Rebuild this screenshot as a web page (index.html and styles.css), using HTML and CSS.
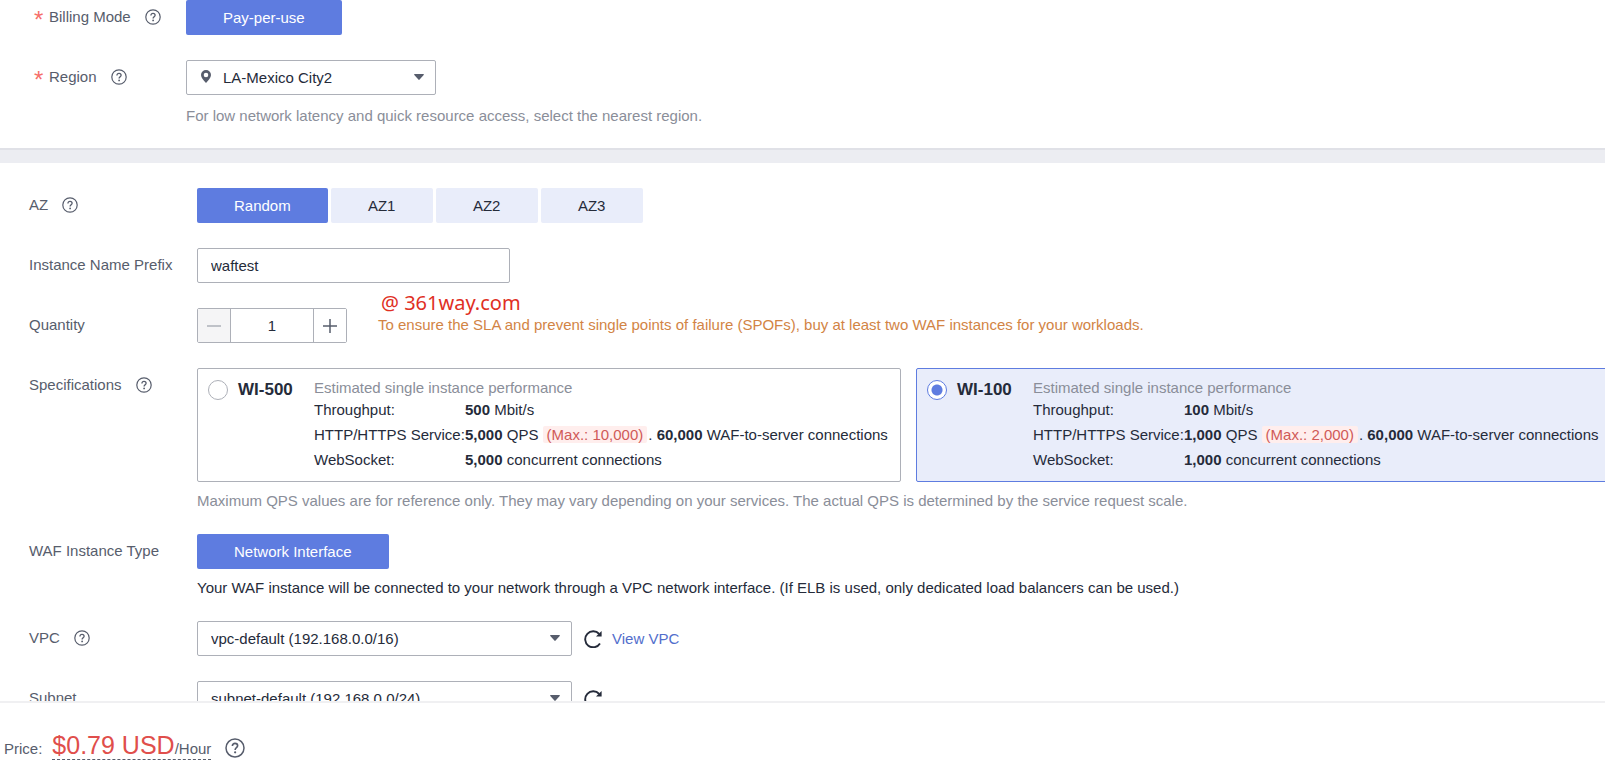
FILE: index.html
```html
<!DOCTYPE html>
<html lang="en">
<head>
    <meta charset="UTF-8">
    <meta name="viewport" content="width=device-width, initial-scale=1.0">
    <title>Buy WAF</title>
    <link rel="stylesheet" href="styles.css">
</head>
<body>
    <!-- shared icons -->
    <svg class="sprite" aria-hidden="true">
        <symbol id="help" viewBox="0 0 16 16">
            <circle cx="8" cy="8" r="7.2" fill="none" stroke="currentColor" stroke-width="1.2"/>
            <path d="M5.9 6.4C5.9 5.1 6.8 4.3 8 4.3s2.1.8 2.1 1.9c0 1.5-2 1.6-2 3.3" fill="none" stroke="currentColor" stroke-width="1.3"/>
            <circle cx="8.1" cy="11.4" r=".9" fill="currentColor"/>
        </symbol>
        <symbol id="caret" viewBox="0 0 10 6">
            <path d="M.8 0h8.4c.6 0 .8.5.5.9L5.6 5.6c-.3.4-.9.4-1.2 0L.3.9C0 .5.2 0 .8 0z" fill="currentColor"/>
        </symbol>
        <symbol id="refresh" viewBox="0 0 18 18">
            <path d="M16 13.500A8 8 0 1 1 15.200 4" fill="none" stroke="currentColor" stroke-width="1.900"/>
            <path d="M17.600 1v5.600H12z" fill="currentColor"/>
        </symbol>
    </svg>

    <main>
        <section class="region-part">
            <div class="row">
                <div class="label">
                    <span class="star">*</span>
                    <span>Billing Mode</span>
                    <svg class="help"><use href="#help"/></svg>
                </div>
                <div class="field">
                    <button type="button" class="btn on">Pay-per-use</button>
                </div>
            </div>

            <div class="row">
                <div class="label">
                    <span class="star">*</span>
                    <label for="region">Region</label>
                    <svg class="help"><use href="#help"/></svg>
                </div>
                <div class="field">
                    <div class="select region">
                        <svg class="pin" viewBox="0 0 10 13">
                            <path d="M5 0a5 5 0 0 1 5 5c0 3-2.600 5-5 8C2.600 10 0 8 0 5a5 5 0 0 1 5-5zm0 2.700a2.300 2.300 0 1 0 0 4.600 2.300 2.300 0 0 0 0-4.600z" fill="currentColor"/>
                        </svg>
                        <select id="region">
                            <option>LA-Mexico City2</option>
                        </select>
                        <svg class="caret"><use href="#caret"/></svg>
                    </div>
                    <p class="hint">For low network latency and quick resource access, select the nearest region.</p>
                </div>
            </div>
        </section>

        <section class="config-part">
            <div class="row">
                <div class="label">
                    <span>AZ</span>
                    <svg class="help"><use href="#help"/></svg>
                </div>
                <div class="field az-list">
                    <button type="button" class="btn on">Random</button>
                    <button type="button" class="btn">AZ1</button>
                    <button type="button" class="btn">AZ2</button>
                    <button type="button" class="btn">AZ3</button>
                </div>
            </div>

            <div class="row">
                <div class="label"><label for="prefix">Instance Name Prefix</label></div>
                <div class="field">
                    <input type="text" id="prefix" class="text" value="waftest">
                </div>
            </div>

            <div class="row">
                <div class="label"><label for="quantity">Quantity</label></div>
                <div class="field quantity">
                    <div class="stepper">
                        <button type="button" aria-label="Decrease" disabled>
                            <svg viewBox="0 0 16 16"><path d="M1 8h14" stroke="currentColor" stroke-width="1.500"/></svg>
                        </button>
                        <input type="text" id="quantity" value="1">
                        <button type="button" aria-label="Increase">
                            <svg viewBox="0 0 16 16"><path d="M1 8h14M8 1v14" stroke="currentColor" stroke-width="1.500"/></svg>
                        </button>
                    </div>
                    <div class="warn">
                        <span class="mark">@ 361way.com</span>
                        <p>To ensure the SLA and prevent single points of failure (SPOFs), buy at least two WAF instances for your workloads.</p>
                    </div>
                </div>
            </div>

            <div class="row">
                <div class="label">
                    <span>Specifications</span>
                    <svg class="help"><use href="#help"/></svg>
                </div>
                <div class="field">
                    <div class="cards">
                        <div class="card">
                            <input type="radio" name="spec" id="wi500">
                            <label for="wi500">WI-500</label>
                            <div class="detail">
                                <p class="sub">Estimated single instance performance</p>
                                <dl>
                                    <dt>Throughput:</dt>
                                    <dd><b>500</b> Mbit/s</dd>
                                    <dt>HTTP/HTTPS Service:</dt>
                                    <dd><b>5,000</b> QPS <em>(Max.: 10,000)</em>. <b>60,000</b> WAF-to-server connections</dd>
                                    <dt>WebSocket:</dt>
                                    <dd><b>5,000</b> concurrent connections</dd>
                                </dl>
                            </div>
                        </div>
                        <div class="card checked">
                            <input type="radio" name="spec" id="wi100" checked>
                            <label for="wi100">WI-100</label>
                            <div class="detail">
                                <p class="sub">Estimated single instance performance</p>
                                <dl>
                                    <dt>Throughput:</dt>
                                    <dd><b>100</b> Mbit/s</dd>
                                    <dt>HTTP/HTTPS Service:</dt>
                                    <dd><b>1,000</b> QPS <em>(Max.: 2,000)</em>. <b>60,000</b> WAF-to-server connections</dd>
                                    <dt>WebSocket:</dt>
                                    <dd><b>1,000</b> concurrent connections</dd>
                                </dl>
                            </div>
                        </div>
                    </div>
                    <p class="hint">Maximum QPS values are for reference only. They may vary depending on your services. The actual QPS is determined by the service request scale.</p>
                </div>
            </div>

            <div class="row">
                <div class="label"><span>WAF Instance Type</span></div>
                <div class="field">
                    <button type="button" class="btn on">Network Interface</button>
                    <p class="hint dark">Your WAF instance will be connected to your network through a VPC network interface. (If ELB is used, only dedicated load balancers can be used.)</p>
                </div>
            </div>

            <div class="row">
                <div class="label">
                    <label for="vpc">VPC</label>
                    <svg class="help"><use href="#help"/></svg>
                </div>
                <div class="field network">
                    <div class="select">
                        <select id="vpc">
                            <option>vpc-default (192.168.0.0/16)</option>
                        </select>
                        <svg class="caret"><use href="#caret"/></svg>
                    </div>
                    <button type="button" class="refresh" aria-label="Refresh"><svg><use href="#refresh"/></svg></button>
                    <a href="#">View VPC</a>
                </div>
            </div>

            <div class="row">
                <div class="label"><label for="subnet">Subnet</label></div>
                <div class="field network">
                    <div class="select">
                        <select id="subnet">
                            <option>subnet-default (192.168.0.0/24)</option>
                        </select>
                        <svg class="caret"><use href="#caret"/></svg>
                    </div>
                    <button type="button" class="refresh" aria-label="Refresh"><svg><use href="#refresh"/></svg></button>
                </div>
            </div>
        </section>
    </main>

    <footer>
        <span>Price:</span>
        <span class="price"><strong>$0.79 USD</strong>/Hour</span>
        <svg class="help"><use href="#help"/></svg>
    </footer>
</body>
</html>
```

FILE: styles.css
```css
*{
    box-sizing: border-box;
    margin: 0;
    padding: 0;
}

body{
    display: flex;
    flex-direction: column;
    height: 100vh;
    overflow: hidden;
    background: #fff;
    color: #252b3a;
    font-family: "Liberation Sans", Arial, sans-serif;
    font-size: 15px;
    line-height: 18px;
}

button, input, select{
    font: inherit;
    color: inherit;
}

svg{
    display: block;
    flex: none;
}

.sprite{
    position: absolute;
    width: 0;
    height: 0;
}

main{
    flex: 1;
    min-height: 0;
    overflow: hidden;
}

/* form rows */
section{
    display: flex;
    flex-direction: column;
    gap: 25px;
}

.region-part{
    padding: 0 0 24px 34px;
    border-bottom: 2px solid #e0e1e7;
}

.config-part{
    padding: 25px 0 25px 29px;
    border-top: 13px solid #ecedf2;
}

.row{
    display: flex;
    align-items: flex-start;
    white-space: nowrap;
}

.label{
    display: flex;
    flex: none;
    align-items: center;
    width: 168px;
    height: 34px;
    color: #575d6c;
}

.region-part .label{width: 152px;}

.star{
    width: 15px;
    padding-top: 6px;
    color: #f66f6a;
    font-size: 24px;
    line-height: 24px;
}

.help{
    width: 16px;
    height: 16px;
    margin-left: 14px;
    color: #575d6c;
}

.field{
    flex: 1;
    min-width: 0;
}

.hint{
    margin-top: 10px;
    line-height: 17px;
    color: #8a8e99;
}

.region-part .hint{margin-top: 12px;}

.dark{color: #252b3a;}

/* buttons */
.btn{
    height: 35px;
    padding: 0 37px;
    border: 0;
    border-radius: 2px;
    background: #e9edfa;
}

.btn.on{
    background: #5e7ce0;
    color: #fff;
}

.az-list{
    display: flex;
    gap: 3px;
}

.az-list .btn{min-width: 102px;}

/* inputs */
.text{
    display: block;
    width: 313px;
    height: 35px;
    padding: 0 13px;
    border: 1px solid #adb0b8;
    border-radius: 2px;
}

.select{
    position: relative;
    width: 375px;
    color: #575d6c;
}

.select select{
    display: block;
    width: 100%;
    height: 35px;
    padding: 0 30px 0 13px;
    border: 1px solid #adb0b8;
    border-radius: 2px;
    background: #fff;
    color: #252b3a;
    appearance: none;
}

.caret{
    position: absolute;
    top: 14px;
    right: 12px;
    width: 10px;
    height: 6px;
}

.region{width: 250px;}
.region select{padding-left: 36px;}

.pin{
    position: absolute;
    top: 10px;
    left: 15px;
    width: 10px;
    height: 13px;
}

.quantity{
    display: flex;
    align-items: flex-end;
    gap: 31px;
    height: 35px;
}

.stepper{
    display: flex;
    width: 150px;
    height: 35px;
    border: 1px solid #adb0b8;
    border-radius: 2px;
}

.stepper button{
    display: flex;
    justify-content: center;
    align-items: center;
    width: 32px;
    border: 0;
    background: #fff;
    color: #575d6c;
}

.stepper button:disabled{
    background: #f5f5f6;
    color: #adb0b8;
}

.stepper svg{
    width: 16px;
    height: 16px;
}

.stepper input{
    flex: 1;
    min-width: 0;
    border: solid #adb0b8;
    border-width: 0 1px;
    text-align: center;
}

.warn{
    padding-bottom: 9px;
    color: #d28445;
}

.mark{
    display: block;
    padding-left: 3px;
    color: #e02f24;
    font-family: "Noto Sans", sans-serif;
    font-size: 20px;
    line-height: 26px;
}

/* specifications */
.cards{
    display: flex;
    gap: 15px;
}

.card{
    display: flex;
    flex: none;
    align-items: flex-start;
    width: 704px;
    padding: 10px 0 9px 10px;
    border: 1px solid #adb0b8;
    border-radius: 2px;
}

.card.checked{
    border-color: #5e7ce0;
    background: #e9edfa;
}

.card input{
    flex: none;
    width: 20px;
    height: 20px;
    margin: 1px 10px 0 0;
    border: 1px solid #adb0b8;
    border-radius: 50%;
    background: #fff;
    appearance: none;
}

.card input:checked{
    border-color: #5e7ce0;
    background: radial-gradient(circle, #5e7ce0 5px, #fff 6px);
}

.card>label{
    flex: none;
    width: 76px;
    font-size: 17px;
    font-weight: bold;
    line-height: 22px;
}

.sub{color: #8a8e99;}

.detail dl{
    display: grid;
    grid-template-columns: 151px auto;
    line-height: 25px;
}

.detail em{
    margin-right: 1px;
    padding: 0 4px;
    border-radius: 2px;
    background: #ffeeed;
    color: #d05a58;
    font-style: normal;
}

/* vpc, subnet */
.network{
    display: flex;
    align-items: center;
}

.refresh{
    margin: 0 10px 0 12px;
    border: 0;
    background: none;
}

.refresh svg{
    width: 18px;
    height: 18px;
}

a{
    color: #526ecc;
    text-decoration: none;
}

/* price bar */
footer{
    display: flex;
    flex: none;
    align-items: baseline;
    height: 64px;
    padding: 32px 4px 0;
    border-top: 2px solid #f0f0f2;
    color: #575d6c;
}

.price{
    margin-left: 10px;
    border-bottom: 1px dashed #575d6c;
    line-height: 20px;
}

.price strong{
    color: #e04e4b;
    font-size: 25px;
    font-weight: normal;
}

footer .help{
    align-self: flex-start;
    width: 20px;
    height: 20px;
    margin-top: 3px;
}
```
